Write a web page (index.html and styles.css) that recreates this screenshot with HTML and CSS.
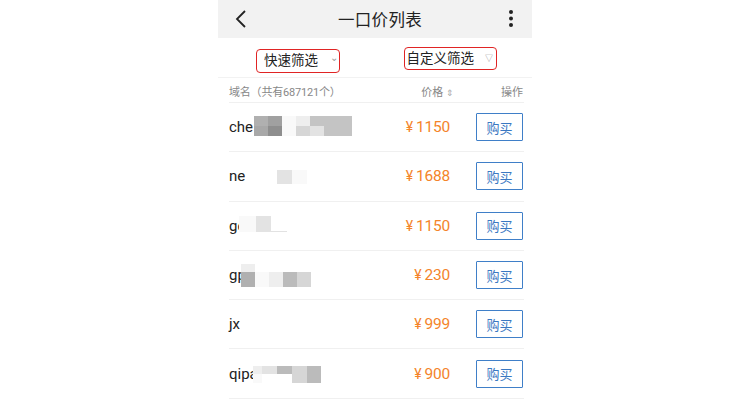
FILE: index.html
```html
<!DOCTYPE html>
<html lang="zh-CN">
<head>
  <meta charset="UTF-8">
  <meta name="viewport" content="width=device-width, initial-scale=1.0">
  <title>一口价列表</title>
  <link rel="stylesheet" href="styles.css">
</head>
<body>
  <div class="page">
    <div class="topbar">
      <svg class="back" width="14" height="20" viewBox="0 0 14 20"><path d="M11 2 L3 10 L11 18" fill="none" stroke="#222" stroke-width="1.8"/></svg>
      <h1>一口价列表</h1>
      <svg class="more" width="6" height="20" viewBox="0 0 6 20"><circle cx="3" cy="3" r="2"/><circle cx="3" cy="9.5" r="2"/><circle cx="3" cy="16" r="2"/></svg>
    </div>

    <div class="filters">
      <div class="filter-cell">
        <div class="filter-box quick">快速筛选 <span class="caret">⌄</span></div>
      </div>
      <div class="filter-cell">
        <div class="filter-box custom">自定义筛选 <span class="funnel">▽</span></div>
      </div>
    </div>

    <div class="list">
      <div class="list-head">
        <span class="col-name">域名（共有687121个）</span>
        <span class="col-price">价格 <span class="sort">⇕</span></span>
        <span class="col-op">操作</span>
      </div>

      <div class="row">
        <div class="domain">che<span class="mosaic m-che">
          <i class="s6"></i><i class="s6b"></i>
          <i class="s7"></i><i class="s8"></i>
          <i class="s0"></i><i class="s0"></i>
          <i class="s1"></i><i class="s3"></i>
          <i class="s4"></i><i class="s2"></i>
          <i class="s4"></i><i class="s4"></i>
          <i class="s4"></i><i class="s4"></i>
        </span></div>
        <div class="price"><span class="yen">¥</span>1150</div>
        <button class="buy">购买</button>
      </div>

      <div class="row">
        <div class="domain">ne<span class="mosaic m-ne">
          <i class="s2"></i><i class="s2"></i>
          <i class="s0"></i><i class="s0"></i>
        </span></div>
        <div class="price"><span class="yen">¥</span>1688</div>
        <button class="buy">购买</button>
      </div>

      <div class="row">
        <div class="domain">gc<span class="mosaic m-gc">
          <i class="s0"></i><i class="s0"></i>
          <i class="s2"></i><i class="s2"></i>
          <i class="w"></i><i class="line"></i>
        </span></div>
        <div class="price"><span class="yen">¥</span>1150</div>
        <button class="buy">购买</button>
      </div>

      <div class="row">
        <div class="domain">gp<span class="mosaic m-gp">
          <i class="s1"></i><i class="s6"></i>
          <i class="n"></i><i class="s0"></i>
          <i class="n"></i><i class="s1"></i>
          <i class="n"></i><i class="s5"></i>
          <i class="n"></i><i class="s3"></i>
        </span></div>
        <div class="price"><span class="yen">¥</span>230</div>
        <button class="buy">购买</button>
      </div>

      <div class="row">
        <div class="domain">jx</div>
        <div class="price"><span class="yen">¥</span>999</div>
        <button class="buy">购买</button>
      </div>

      <div class="row">
        <div class="domain">qipa<span class="mosaic m-qipa">
          <i class="s1"></i><i class="s0"></i>
          <i class="s2"></i><i class="w"></i>
          <i class="s5"></i><i class="w"></i>
          <i class="s3"></i><i class="s3"></i>
          <i class="s5"></i><i class="s5"></i>
        </span></div>
        <div class="price"><span class="yen">¥</span>900</div>
        <button class="buy">购买</button>
      </div>
    </div>
  </div>
</body>
</html>
```

FILE: styles.css
```css
body {
  margin: 0;
  background-color: #fff;
  font-family: Roboto, "Noto Sans CJK SC", sans-serif;
  color: #222;
}
.page {
  width: 314px;
  margin: 0 auto;
  height: 400px;
  overflow: hidden;
}
.topbar {
  height: 38px;
  background-color: #f2f2f2;
  display: flex;
  align-items: center;
  justify-content: space-between;
  padding: 0 18px 0 16px;
}
.topbar h1 {
  margin: 0;
  font-size: 16.5px;
  font-weight: 400;
  letter-spacing: 0.3px;
  margin-left: 4px;
}
.back {
  display: block;
}
.more {
  display: block;
  fill: #222;
}
.filters {
  height: 39px;
  display: flex;
  border-bottom: 1px solid #f2f2f2;
}
.filter-cell {
  flex: 1;
  display: flex;
  justify-content: center;
  align-items: center;
}
.filter-box {
  border: 1.5px solid #e02424;
  border-radius: 4px;
  font-size: 13.5px;
  line-height: 21px;
  color: #222;
  display: flex;
  align-items: center;
  box-sizing: border-box;
}
.filter-box.quick {
  width: 84px;
  height: 24px;
  padding-left: 7px;
  margin-top: 6px;
  margin-left: 3px;
}
.filter-box.custom {
  width: 93px;
  height: 23px;
  padding-left: 2px;
  margin-top: 1px;
  margin-right: 7px;
}
.caret {
  font-size: 10px;
  color: #999;
  margin-left: 12px;
  margin-top: -6px;
}
.funnel {
  font-size: 8px;
  color: #999;
  margin-left: 11px;
}
.list {
  padding: 0 8px 0 11px;
}
.list-head {
  height: 25px;
  display: flex;
  align-items: center;
  font-size: 11px;
  color: #888;
  border-bottom: 1px solid #f0f0f0;
  box-sizing: border-box;
  padding-top: 1px;
}
.col-name {
  flex: 1;
  letter-spacing: -0.2px;
}
.col-price {
  margin-right: 47px;
}
.sort {
  font-size: 9px;
  color: #aaa;
}
.col-op {
  margin-right: 1px;
}
.row {
  height: 49.3px;
  box-sizing: border-box;
  display: flex;
  align-items: center;
  border-bottom: 1px solid #f0f0f0;
}
.domain {
  flex: 1;
  display: flex;
  align-items: center;
  font-size: 15px;
  color: #222;
}
.price {
  font-size: 15.5px;
  color: #f4842a;
  margin-right: 26px;
  letter-spacing: -0.2px;
}
.yen {
  font-size: 14px;
  margin-right: 3px;
}
.buy {
  width: 47px;
  height: 28px;
  border: 1px solid #3f7fc8;
  background-color: #fff;
  color: #3a78c2;
  font-family: "Noto Sans CJK SC", sans-serif;
  font-size: 13px;
  padding: 0;
  margin: 0 1px 0 0;
  border-radius: 1px;
}
/* pixelated blur over the domain names */
.mosaic {
  display: inline-grid;
  grid-auto-flow: column;
  grid-template-rows: repeat(2, 10px);
  grid-auto-columns: 14px;
  position: relative;
}
.mosaic i { display: block; }
.m-che { margin-left: 1px; margin-top: -2px; }
.m-ne { margin-left: 32px; grid-template-rows: repeat(2, 7px); grid-auto-columns: 15px; margin-top: 2px; }
.m-gc { margin-left: -6px; grid-template-rows: 8px 8px; grid-auto-columns: 17px 15px 16px; margin-top: -4px; }
.m-gp { margin-left: -5px; grid-template-rows: 8px 15px; margin-top: 0; }
.m-qipa { margin-left: -5px; grid-template-rows: 8px 9px; grid-auto-columns: 9px 15px 15px 15px 14px; margin-top: 1px; }
.s0 { background: #f9f9f9; }
.s1 { background: #eeeeee; }
.s2 { background: #e3e3e3; }
.s3 { background: #d6d6d6; }
.s4 { background: #c4c4c4; }
.s5 { background: #bbbbbb; }
.s6 { background: #b0b0b0; }
.s6b { background: #a8a8a8; }
.s7 { background: #a0a0a0; }
.s8 { background: #8e8e8e; }
.w { background: #fff; }
.n { background: transparent; }
.line { background: #fff; border-bottom: 1px solid #e2e2e2; box-sizing: border-box; }
```
